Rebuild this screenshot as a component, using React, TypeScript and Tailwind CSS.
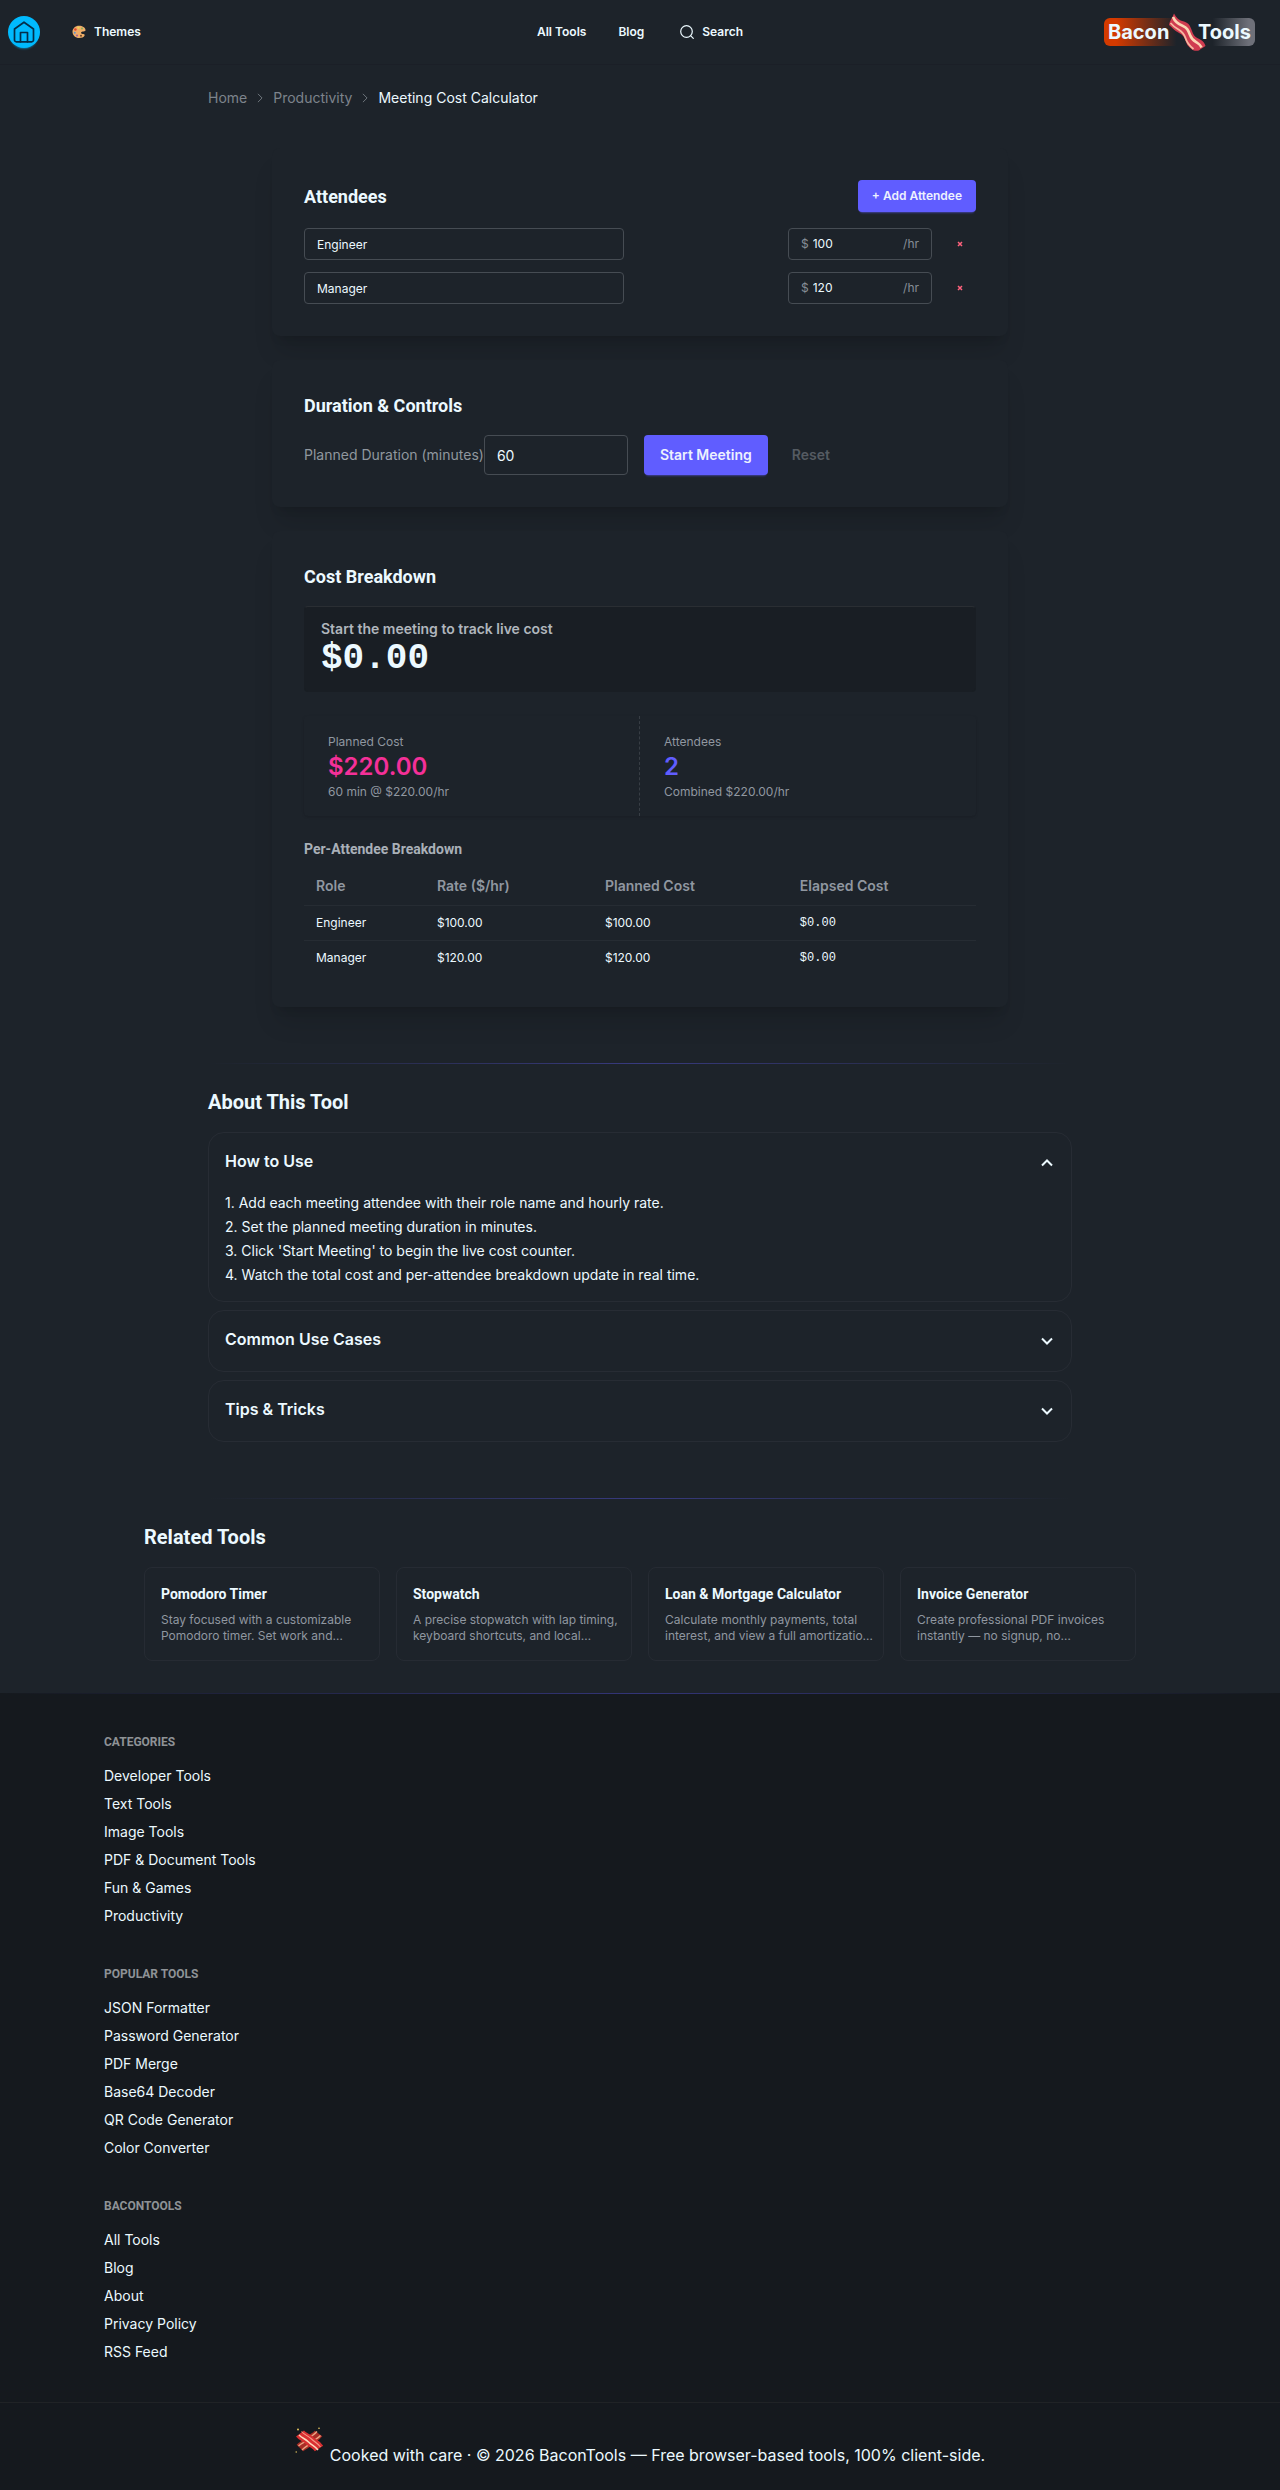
import React, { useState } from "react";

type Attendee = { id: number; role: string; rate: number };

const BODY = "font-['Inter','Liberation_Sans',sans-serif]";
const HEADING = "font-['Roboto','Liberation_Sans',sans-serif] font-bold";
const MONO = "font-['Liberation_Mono',monospace]";

const accordionItems = [
  {
    title: "How to Use",
    lines: [
      "1. Add each meeting attendee with their role name and hourly rate.",
      "2. Set the planned meeting duration in minutes.",
      "3. Click 'Start Meeting' to begin the live cost counter.",
      "4. Watch the total cost and per-attendee breakdown update in real time.",
    ],
  },
  { title: "Common Use Cases", lines: [] },
  { title: "Tips & Tricks", lines: [] },
];

const relatedTools = [
  {
    name: "Pomodoro Timer",
    lines: ["Stay focused with a customizable", "Pomodoro timer. Set work and…"],
  },
  {
    name: "Stopwatch",
    lines: ["A precise stopwatch with lap timing,", "keyboard shortcuts, and local…"],
  },
  {
    name: "Loan & Mortgage Calculator",
    lines: ["Calculate monthly payments, total", "interest, and view a full amortizatio…"],
  },
  {
    name: "Invoice Generator",
    lines: ["Create professional PDF invoices", "instantly — no signup, no…"],
  },
];

const footerColumns = [
  {
    title: "CATEGORIES",
    links: [
      "Developer Tools",
      "Text Tools",
      "Image Tools",
      "PDF & Document Tools",
      "Fun & Games",
      "Productivity",
    ],
  },
  {
    title: "POPULAR TOOLS",
    links: [
      "JSON Formatter",
      "Password Generator",
      "PDF Merge",
      "Base64 Decoder",
      "QR Code Generator",
      "Color Converter",
    ],
  },
  {
    title: "BACONTOOLS",
    links: ["All Tools", "Blog", "About", "Privacy Policy", "RSS Feed"],
  },
];

const money = (value: number) => `$${value.toFixed(2)}`;

function HomeIcon() {
  return (
    <svg viewBox="0 0 24 24" className="h-6 w-6" fill="none" stroke="#042e49" strokeWidth="1.7" strokeLinejoin="round" strokeLinecap="round">
      <path d="M2.5 9 12 2.200 21.500 9V20a1.800 1.800 0 0 1-1.800 1.800H4.300A1.800 1.800 0 0 1 2.500 20Z" />
      <path d="M8.500 21.800V12.500h7v9.300" />
    </svg>
  );
}

function PaletteIcon() {
  return (
    <svg viewBox="0 0 28 28" className="h-3.5 w-3.5">
      <path
        d="M14 1.500C6.500 1.500 1 6.800 1 13.500 1 20.500 7 26 14.500 26c5 0 9-1.800 10.500-4.500 1.200-2.300-.5-3.800-3-3.500-2.500.3-4.300-.8-3.800-2.800.5-1.900 2.700-2 5-2.200 2.500-.2 4-1 3.800-3C26.600 5 21 1.500 14 1.500Z"
        fill="#efae68"
      />
      <circle cx="13" cy="5.500" r="2" fill="#f2d94c" />
      <circle cx="6.800" cy="9" r="2.500" fill="#e5432f" />
      <circle cx="20" cy="7" r="1.800" fill="#7ab05a" />
      <circle cx="5.500" cy="15.500" r="1.900" fill="#5a90d0" />
      <circle cx="10" cy="21" r="1.900" fill="#9a5aa8" />
      <circle cx="18" cy="21.500" r="1.800" fill="#5d3a22" />
    </svg>
  );
}

function BaconIcon() {
  return (
    <svg viewBox="0 0 38 38" className="h-[38px] w-[38px]" fill="none">
      <path
        d="M6 .5C9 6 11 7 16 8.500c5 1.800 6 4 8 9.500 2 6 4 6 9 9 2.500 1.500 4 4 4.500 6-2 1.500-4 2-6.500 4.500-3 .5-5.500.3-7-1-4-3.500-5-4.500-6.500-9-1.500-4.500-3.500-6-8-8.500C5.500 17 5.500 15.500 1 12c.5-4 3.500-7.500 5-11.500Z"
        fill="#d03c50"
      />
      <path d="M5 4c2 5 5 7 9.500 8.800 4.500 1.800 5.500 4 7.500 9.200 1.800 5 3.500 5.500 7.500 8 2 1.200 3.500 3 4 4.500" stroke="#fbd6b4" strokeWidth="2.600" />
      <path d="M2.500 10c3 3.500 4 4 8 6.500 4 2.500 5.500 4 7 8.500 1.500 5 3 7 8 11" stroke="#f6b9a0" strokeWidth="1.800" />
    </svg>
  );
}

function CrossedBacon() {
  return (
    <svg viewBox="0 0 29 28" className="h-7 w-[29px]" fill="none">
      <path d="M23.500 6.500c-3 4-6 4-9 7.500s-6 3.500-9.500 7" stroke="#a82c26" strokeWidth="9.500" />
      <path d="M22 4.500c-3 3.500-6 4.500-8.500 7.500S7 15.500 3.500 19" stroke="#eda481" strokeWidth="1.400" />
      <path d="M25.500 8.500c-3 3.500-6 4-9 7s-6 4-9.500 7.500" stroke="#eda481" strokeWidth="1.400" />
      <path d="M5 6.500c3 4 6 3.500 9.500 7s6.500 3.500 9.500 8" stroke="#d92f31" strokeWidth="10" />
      <path d="M6.500 4.500c3.500 4 6.500 4 10 7.500s6 4 9 8" stroke="#f59a86" strokeWidth="1.100" />
      <path d="M4 8c3.500 3.500 6 3.500 9.500 7s6.500 4 9.500 8" stroke="#fcd9bd" strokeWidth="1.500" />
      <circle cx="3" cy="2.500" r=".9" fill="#f6d465" />
      <circle cx="24" cy="1.200" r=".8" fill="#f6d465" />
      <circle cx="1.200" cy="25" r=".7" fill="#f6d465" />
    </svg>
  );
}

function Chevron({ className }: { className: string }) {
  return (
    <svg viewBox="0 0 12 12" className={className} fill="none" stroke="currentColor">
      <path d="m1 3.500 5 5 5-5" />
    </svg>
  );
}

function Divider() {
  return <div className="h-px bg-gradient-to-r from-transparent via-[#605dff]/40 to-transparent" />;
}

function Card({ children }: { children: React.ReactNode }) {
  return (
    <section className="rounded-lg bg-[#1d232a] p-8 shadow-[0_20px_25px_-5px_rgb(0_0_0/0.12),0_8px_10px_-6px_rgb(0_0_0/0.12)]">
      {children}
    </section>
  );
}

function Header() {
  return (
    <header className="grid h-[65px] grid-cols-[1fr_auto_1fr] items-center border-b border-[#1b1f27] px-2 text-xs font-semibold">
      <div className="flex items-center">
        <a href="#home" aria-label="Home" className="flex h-8 w-8 items-center justify-center rounded-full bg-[#00bafe] shadow-[0_3px_2px_-2px_#00bafe80]">
          <HomeIcon />
        </a>
        <button className="ml-8 flex items-center gap-2">
          <PaletteIcon />
          Themes
        </button>
      </div>
      <nav className="flex items-center">
        <a href="#tools">All Tools</a>
        <a href="#blog" className="ml-8">Blog</a>
        <button className="ml-9 flex items-center gap-2">
          <svg viewBox="0 0 14 14" className="h-3.5 w-3.5" fill="none" stroke="currentColor" strokeWidth="1.200" strokeLinecap="round">
            <circle cx="6.500" cy="6.500" r="5.800" />
            <path d="m10.800 10.800 2.500 2.500" />
          </svg>
          Search
        </button>
      </nav>
      <a href="#home" className="relative mr-[17px] flex h-7 w-[151px] items-center justify-between justify-self-end rounded-md bg-[linear-gradient(90deg,#d43a00_8%,transparent_48%,transparent_72%,#6e7079_96%)] px-1 text-xl font-bold">
        <span>Bacon</span>
        <span>Tools</span>
        <span className="absolute -top-[5px] left-16">
          <BaconIcon />
        </span>
      </a>
    </header>
  );
}

function Attendees({ attendees, onChange }: { attendees: Attendee[]; onChange: (next: Attendee[]) => void }) {
  const update = (id: number, patch: Partial<Attendee>) =>
    onChange(attendees.map((a) => (a.id === id ? { ...a, ...patch } : a)));

  return (
    <Card>
      <div className="mb-4 flex items-center justify-between">
        <h2 className={`${HEADING} text-lg leading-[27px]`}>Attendees</h2>
        <button
          onClick={() => onChange([...attendees, { id: Date.now(), role: "", rate: 0 }])}
          className="h-8 rounded bg-[#605dff] px-3.5 text-xs font-semibold text-[#edf1fe] shadow-[0_3px_2px_-2px_#605dff80]"
        >
          + Add Attendee
        </button>
      </div>
      <div className="flex flex-col gap-3">
        {attendees.map((a) => (
          <div key={a.id} className="flex items-center justify-between">
            <input
              aria-label="Role"
              value={a.role}
              onChange={(e) => update(a.id, { role: e.target.value })}
              className="h-8 w-80 rounded border border-[#464c53] bg-transparent px-3 text-xs"
            />
            <div className="flex items-center gap-3">
              <label className="flex h-8 w-36 items-center rounded border border-[#464c53] px-3 text-xs text-[#868e96]">
                <span className="mr-1">$</span>
                <input
                  aria-label="Hourly rate"
                  value={a.rate}
                  onChange={(e) => update(a.id, { rate: Number(e.target.value) || 0 })}
                  className="min-w-0 flex-1 bg-transparent text-[#ecf9ff]"
                />
                <span>/hr</span>
              </label>
              <button
                aria-label="Remove attendee"
                onClick={() => onChange(attendees.filter((x) => x.id !== a.id))}
                className="flex h-8 w-8 items-center justify-center text-[#ff627d]"
              >
                <svg viewBox="0 0 6 6" className="h-1.5 w-1.5" stroke="currentColor" strokeWidth="1.500">
                  <path d="m1 1 4 4M5 1 1 5" />
                </svg>
              </button>
            </div>
          </div>
        ))}
      </div>
    </Card>
  );
}

function Controls({ minutes, onChange }: { minutes: number; onChange: (m: number) => void }) {
  return (
    <Card>
      <h2 className={`${HEADING} mb-4 text-lg leading-[27px]`}>Duration &amp; Controls</h2>
      <div className="flex items-center">
        <label htmlFor="duration" className="text-sm text-[#90979e]">
          Planned Duration (minutes)
        </label>
        <input
          id="duration"
          value={minutes}
          onChange={(e) => onChange(Number(e.target.value) || 0)}
          className="h-10 w-36 rounded border border-[#464c53] bg-transparent px-3 text-sm"
        />
        <button className="ml-4 h-10 rounded bg-[#605dff] px-4 text-sm font-semibold text-[#edf1fe] shadow-[0_3px_2px_-2px_#605dff80]">
          Start Meeting
        </button>
        <button disabled className="ml-2 h-10 px-4 text-sm font-semibold text-[#555b62]">
          Reset
        </button>
      </div>
    </Card>
  );
}

function Breakdown({ attendees, minutes }: { attendees: Attendee[]; minutes: number }) {
  const hourly = attendees.reduce((sum, a) => sum + a.rate, 0);
  const planned = (rate: number) => (rate * minutes) / 60;

  return (
    <Card>
      <h2 className={`${HEADING} mb-4 text-lg leading-[27px]`}>Cost Breakdown</h2>
      <div className="rounded border border-[#191e24] border-t-[#2a2e33] bg-[#191e24] px-4 py-3">
        <p className="text-sm font-semibold text-[#b0b6bd]">Start the meeting to track live cost</p>
        <p className={`${MONO} text-4xl font-bold`}>$0.00</p>
      </div>

      <div className="mt-6 grid grid-cols-2 rounded shadow-sm">
        <div className="flex flex-col gap-px border-r border-dashed border-[#383e45] px-6 pt-[18px] pb-4 text-xs text-[#9097a0]">
          <span>Planned Cost</span>
          <span className="text-2xl font-semibold text-[#f43098]">{money(planned(hourly))}</span>
          <span>{minutes} min @ {money(hourly)}/hr</span>
        </div>
        <div className="flex flex-col gap-px px-6 pt-[18px] pb-4 text-xs text-[#9097a0]">
          <span>Attendees</span>
          <span className="text-2xl font-semibold text-[#605dff]">{attendees.length}</span>
          <span>Combined {money(hourly)}/hr</span>
        </div>
      </div>

      <h3 className={`${HEADING} mt-6 mb-2 text-sm leading-[19px] text-[#a9b0b8]`}>Per-Attendee Breakdown</h3>
      <table className="w-full table-fixed text-left text-xs">
        <thead className="text-sm text-[#9097a0]">
          <tr className="h-[38px] border-b border-[#262c33]">
            <th className="w-[18%] px-3 font-semibold">Role</th>
            <th className="w-[25%] px-3 font-semibold">Rate ($/hr)</th>
            <th className="w-[29%] px-3 font-semibold">Planned Cost</th>
            <th className="w-[28%] px-3 font-semibold">Elapsed Cost</th>
          </tr>
        </thead>
        <tbody>
          {attendees.map((a) => (
            <tr key={a.id} className="h-[35px] border-b border-[#262c33] last:border-0">
              <td className="px-3">{a.role}</td>
              <td className="px-3">{money(a.rate)}</td>
              <td className="px-3">{money(planned(a.rate))}</td>
              <td className={`${MONO} px-3`}>$0.00</td>
            </tr>
          ))}
        </tbody>
      </table>
    </Card>
  );
}

function About() {
  const [open, setOpen] = useState(0);

  return (
    <section>
      <h2 className={`${HEADING} pt-6 text-xl`}>About This Tool</h2>
      <div className="mt-4 flex flex-col gap-2">
        {accordionItems.map((item, i) => (
          <div key={item.title} className="rounded-2xl border border-[#272c34]">
            <button
              onClick={() => setOpen(open === i ? -1 : i)}
              className={`flex w-full items-start justify-between px-4 pt-4 text-left text-base font-semibold ${
                open === i ? "h-[58px]" : "h-[60px]"
              }`}
            >
              {item.title}
              <Chevron className={`mt-2 mr-0.5 h-3 w-3 stroke-2 ${open === i ? "rotate-180" : ""}`} />
            </button>
            {open === i && item.lines.length > 0 && (
              <div className="px-4 pb-3.5 text-sm leading-6">
                {item.lines.map((line) => (
                  <p key={line}>{line}</p>
                ))}
              </div>
            )}
          </div>
        ))}
      </div>
    </section>
  );
}

function Footer() {
  return (
    <footer className="bg-[#15191e]">
      <Divider />
      <div className="flex flex-col gap-10 px-[104px] py-10">
        {footerColumns.map((col) => (
          <nav key={col.title}>
            <h3 className={`${HEADING} mb-4 text-xs text-[#8e9296]`}>{col.title}</h3>
            <ul className="flex flex-col gap-2 text-sm">
              {col.links.map((link) => (
                <li key={link}>
                  <a href="#link">{link}</a>
                </li>
              ))}
            </ul>
          </nav>
        ))}
      </div>
      <div className="flex items-end justify-center gap-1.5 border-t border-[#202326] py-6">
        <div className="pb-3">
          <CrossedBacon />
        </div>
        <p className="text-base">
          Cooked with care · © 2026 BaconTools — Free browser-based tools, 100% client-side.
        </p>
      </div>
    </footer>
  );
}

export default function App() {
  const [attendees, setAttendees] = useState<Attendee[]>([
    { id: 1, role: "Engineer", rate: 100 },
    { id: 2, role: "Manager", rate: 120 },
  ]);
  const [minutes, setMinutes] = useState(60);

  return (
    <div className={`${BODY} min-h-screen bg-[#1d232a] text-[#ecf9ff]`}>
      <Header />

      <main>
        <div className="mx-auto max-w-4xl px-4">
          {/* Breadcrumbs */}
          <nav className="flex items-center gap-2 pt-[23px] text-sm text-[#7d848c]">
            <a href="#home">Home</a>
            <Chevron className="h-2.5 w-2.5 -rotate-90" />
            <a href="#productivity">Productivity</a>
            <Chevron className="h-2.5 w-2.5 -rotate-90" />
            <span className="text-[#ecf9ff]">Meeting Cost Calculator</span>
          </nav>

          <div className="flex flex-col gap-6 px-16 pt-10 pb-14">
            <Attendees attendees={attendees} onChange={setAttendees} />
            <Controls minutes={minutes} onChange={setMinutes} />
            <Breakdown attendees={attendees} minutes={minutes} />
          </div>

          <Divider />
          <About />
          <div className="mt-14">
            <Divider />
          </div>
        </div>

        {/* Related tools */}
        <section className="mx-auto max-w-5xl px-4 pt-6 pb-8">
          <h2 className={`${HEADING} mb-4 text-xl`}>Related Tools</h2>
          <div className="grid grid-cols-4 gap-4">
            {relatedTools.map((tool) => (
              <a key={tool.name} href="#tool" className="rounded-lg border border-[#262b33] p-4">
                <h3 className={`${HEADING} mb-2 text-sm`}>{tool.name}</h3>
                <p className="text-xs whitespace-nowrap text-[#9097a0]">
                  {tool.lines[0]}
                  <br />
                  {tool.lines[1]}
                </p>
              </a>
            ))}
          </div>
        </section>
      </main>

      <Footer />
    </div>
  );
}
